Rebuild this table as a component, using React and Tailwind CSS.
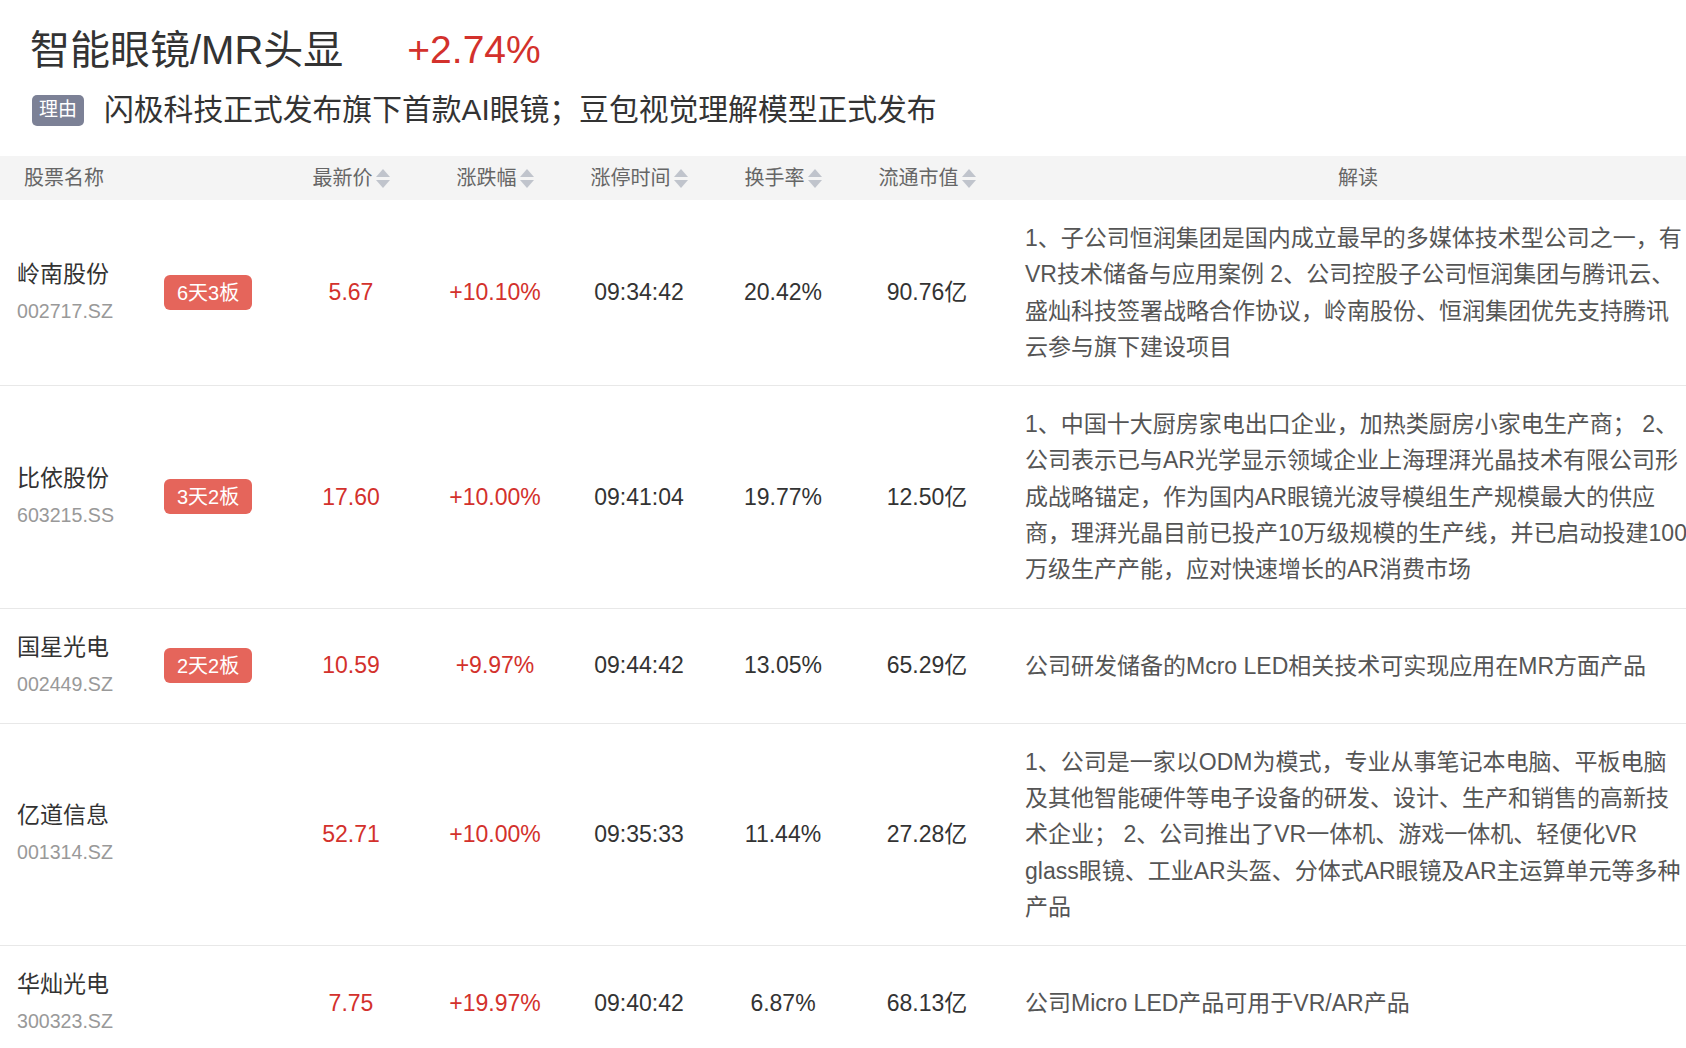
const rows = [
  {
    name: '岭南股份', code: '002717.SZ', tag: '6天3板', price: '5.67', change: '+10.10%', time: '09:34:42', turnover: '20.42%', cap: '90.76亿',
    lines: [
      '1、子公司恒润集团是国内成立最早的多媒体技术型公司之一，有',
      'VR技术储备与应用案例 2、公司控股子公司恒润集团与腾讯云、',
      '盛灿科技签署战略合作协议，岭南股份、恒润集团优先支持腾讯',
      '云参与旗下建设项目',
    ],
  },
  {
    name: '比依股份', code: '603215.SS', tag: '3天2板', price: '17.60', change: '+10.00%', time: '09:41:04', turnover: '19.77%', cap: '12.50亿',
    lines: [
      '1、中国十大厨房家电出口企业，加热类厨房小家电生产商； 2、',
      '公司表示已与AR光学显示领域企业上海理湃光晶技术有限公司形',
      '成战略锚定，作为国内AR眼镜光波导模组生产规模最大的供应',
      '商，理湃光晶目前已投产10万级规模的生产线，并已启动投建100',
      '万级生产产能，应对快速增长的AR消费市场',
    ],
  },
  {
    name: '国星光电', code: '002449.SZ', tag: '2天2板', price: '10.59', change: '+9.97%', time: '09:44:42', turnover: '13.05%', cap: '65.29亿',
    lines: ['公司研发储备的Mcro LED相关技术可实现应用在MR方面产品'],
  },
  {
    name: '亿道信息', code: '001314.SZ', tag: null, price: '52.71', change: '+10.00%', time: '09:35:33', turnover: '11.44%', cap: '27.28亿',
    lines: [
      '1、公司是一家以ODM为模式，专业从事笔记本电脑、平板电脑',
      '及其他智能硬件等电子设备的研发、设计、生产和销售的高新技',
      '术企业； 2、公司推出了VR一体机、游戏一体机、轻便化VR',
      'glass眼镜、工业AR头盔、分体式AR眼镜及AR主运算单元等多种',
      '产品',
    ],
  },
  {
    name: '华灿光电', code: '300323.SZ', tag: null, price: '7.75', change: '+19.97%', time: '09:40:42', turnover: '6.87%', cap: '68.13亿',
    lines: ['公司Micro LED产品可用于VR/AR产品'],
  },
]

const sortCols = ['最新价', '涨跌幅', '涨停时间', '换手率', '流通市值']

function SortIcon() {
  return (
    <svg width="14" height="22" viewBox="0 0 14 22" className="ml-[3px] shrink-0">
      <polygon points="7,2 14,10 0,10" fill="#c0c4cc" />
      <polygon points="0,13 14,13 7,21" fill="#c0c4cc" />
    </svg>
  )
}

export default function App() {
  return (
    <div className="w-full min-h-screen bg-white overflow-hidden font-['Liberation_Sans','Noto_Sans_CJK_SC',sans-serif]">
      <div className="pt-[22px] pl-[30px]">
        <div className="flex items-center leading-[56px] text-[40px]">
          <span className="text-[#333]">智能眼镜/MR头显</span>
          <span className="ml-[64px] text-[39px] text-[#d3312c]">+2.74%</span>
        </div>
        <div className="flex items-center mt-[14px] h-[36px]">
          <span className="ml-[2px] w-[52px] h-[31px] flex items-center justify-center rounded-[5px] bg-[#7c8196] text-white text-[19px]">理由</span>
          <span className="ml-[20px] text-[29.8px] leading-[36px] text-[#333]">闪极科技正式发布旗下首款AI眼镜；豆包视觉理解模型正式发布</span>
        </div>
      </div>

      <table className="mt-[28px] w-[1717px] table-fixed border-collapse">
        <colgroup>
          <col className="w-[140px]" />
          <col className="w-[139px]" />
          <col className="w-[144px]" />
          <col className="w-[144px]" />
          <col className="w-[144px]" />
          <col className="w-[144px]" />
          <col className="w-[144px]" />
          <col className="w-[718px]" />
        </colgroup>
        <thead>
          <tr className="h-[44px] bg-[#f4f4f4] text-[20px] text-[#666]">
            <th colSpan={2} className="pl-[24px] text-left font-normal">股票名称</th>
            {sortCols.map(c => (
              <th key={c} className="font-normal">
                <div className="flex items-center justify-center">
                  <span>{c}</span>
                  <SortIcon />
                </div>
              </th>
            ))}
            <th className="font-normal text-center">解读</th>
          </tr>
        </thead>
        <tbody>
          {rows.map(r => (
            <tr key={r.code} className="border-b border-[#e8e8e8] text-[23px]">
              <td className="pl-[17px] py-[20px] align-middle">
                <div className="leading-[37px] text-[#333]">{r.name}</div>
                <div className="leading-[37px] text-[19.6px] text-[#999]">{r.code}</div>
              </td>
              <td className="align-middle">
                {r.tag && (
                  <div className="flex justify-start pl-[24px]">
                    <span className="h-[35px] px-[13px] flex items-center rounded-[6px] bg-[#e5655b] text-white text-[20px]">{r.tag}</span>
                  </div>
                )}
              </td>
              <td className="text-center text-[#d3312c]">{r.price}</td>
              <td className="text-center text-[#d3312c]">{r.change}</td>
              <td className="text-center text-[#333]">{r.time}</td>
              <td className="text-center text-[#333]">{r.turnover}</td>
              <td className="text-center text-[#333]">{r.cap}</td>
              <td className="pl-[26px] py-[20px] align-middle text-[#555] leading-[36.3px] whitespace-nowrap">
                {r.lines.map((l, i) => (
                  <div key={i}>{l}</div>
                ))}
              </td>
            </tr>
          ))}
        </tbody>
      </table>
    </div>
  )
}
